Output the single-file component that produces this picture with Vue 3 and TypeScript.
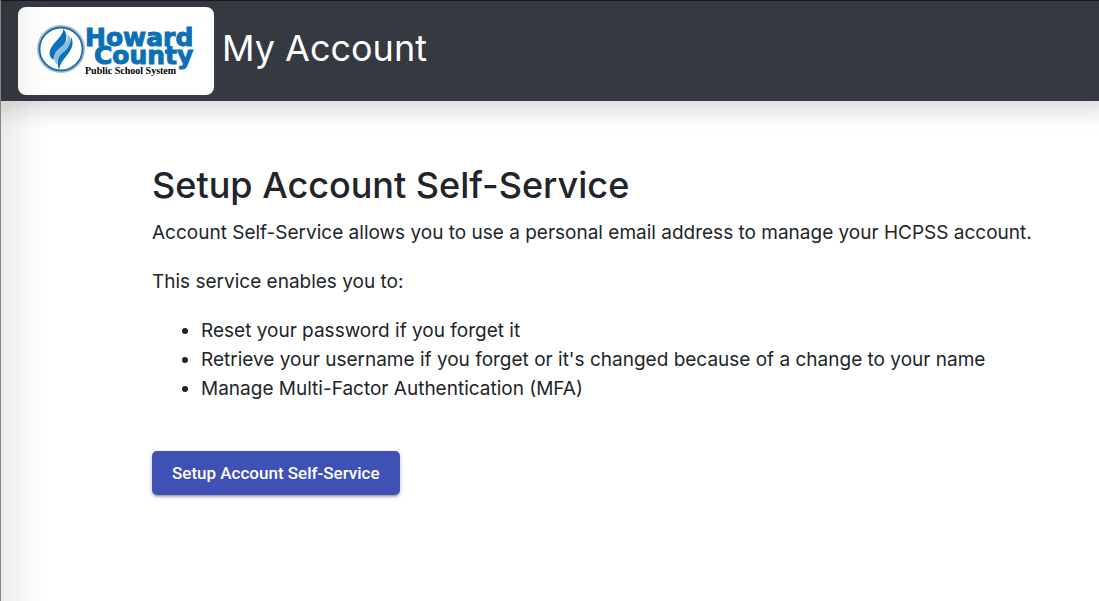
<script setup lang="ts">
const title: string = 'Setup Account Self-Service'
const features: string[] = [
  'Reset your password if you forget it',
  "Retrieve your username if you forget or it's changed because of a change to your name",
  'Manage Multi-Factor Authentication (MFA)',
]
</script>

<template>
  <div class="page">
    <header class="topbar">
      <a class="logo" href="#" aria-label="Howard County Public School System">
        <svg width="196" height="88" viewBox="0 0 196 88" aria-hidden="true">
          <circle cx="43" cy="42" r="23" fill="#fff" stroke="#b9b9bb" stroke-width="2" />
          <circle cx="43" cy="42" r="21.5" fill="#fff" stroke="#0b70b8" stroke-width="1.8" />
          <path d="M45.500 22C44.500 31 32 37 31.500 46C31.400 49 33 51 35.500 53C35.500 47 40 44 44 40C48.500 35.500 50.500 28 45.500 22Z" fill="#0b70b8" />
          <path d="M49.500 26C51 35 45 38 40.500 42C36 46 35 50 37 55L39.500 58C39 52 41 49 45 46C50 42 53 38 52.500 31Z" fill="#8fbde2" />
          <path d="M53 30C53 38 49.500 42 44.500 46C39.500 50 38.500 55 41 63C42 56 46 52 50 47C54.500 41 56 36 53 30Z" fill="#0b70b8" />
          <text class="logo-name" x="67" y="39">Howard</text>
          <text class="logo-name" x="76" y="57">County</text>
          <text class="logo-sub" x="67" y="67">Public School System</text>
        </svg>
      </a>
      <span class="brand">My Account</span>
    </header>
    <main class="content">
      <h1>{{ title }}</h1>
      <p>Account Self-Service allows you to use a personal email address to manage your HCPSS account.</p>
      <p>This service enables you to:</p>
      <ul>
        <li v-for="feature in features" :key="feature">{{ feature }}</li>
      </ul>
      <button type="button">{{ title }}</button>
    </main>
  </div>
</template>

<style>
body {
  margin: 0;
  background: #fff;
}
</style>

<style scoped>
.page {
  position: relative;
  box-sizing: border-box;
  min-height: 100vh;
  overflow-x: clip;
  font-family: Inter, "Liberation Sans", sans-serif;
  color: #212529;
}
.page::after {
  content: "";
  position: absolute;
  inset: 0 auto 0 0;
  width: 50px;
  box-sizing: border-box;
  border-left: 1px solid #858585;
  background: linear-gradient(to right, rgba(0, 0, 0, 0.08), rgba(0, 0, 0, 0.02) 60%, rgba(0, 0, 0, 0));
  pointer-events: none;
}
.topbar {
  display: flex;
  align-items: center;
  gap: 8px;
  box-sizing: border-box;
  padding: 6px 18px;
  border-top: 1px solid #17191c;
  background: #343a40;
  box-shadow: 0 -6px 24px 14px rgba(0, 0, 0, 0.17);
}
.logo {
  display: block;
  border-radius: 8px;
  background: #fff;
}
.logo svg {
  display: block;
}
.logo-name {
  font: 700 25px "DejaVu Sans", sans-serif;
  fill: #0b70b8;
  stroke: #0b70b8;
  stroke-width: 1px;
}
.logo-sub {
  font: 700 10px "Liberation Serif", serif;
  fill: #000;
}
.brand {
  color: #fff;
  font-size: 36px;
  line-height: 48px;
  padding-bottom: 6px;
}
.content {
  padding: 60px 60px 48px 152px;
}
h1 {
  margin: 0 0 9px;
  font-size: 36px;
  font-weight: 500;
  line-height: 48px;
}
p,
ul {
  margin: 0 0 20px;
  font-size: 19px;
  line-height: 29px;
}
ul {
  padding-left: 49px;
  margin-bottom: 48px;
}
button {
  padding: 0 20px;
  border: 0;
  border-radius: 5px;
  background: #3f51b5;
  color: #fff;
  font-family: Roboto, sans-serif;
  font-size: 17px;
  font-weight: 500;
  line-height: 44px;
  box-shadow: 0 3px 2px -2px rgba(0, 0, 0, 0.2), 0 2px 3px rgba(0, 0, 0, 0.2), 0 1px 6px rgba(0, 0, 0, 0.12);
}
</style>
